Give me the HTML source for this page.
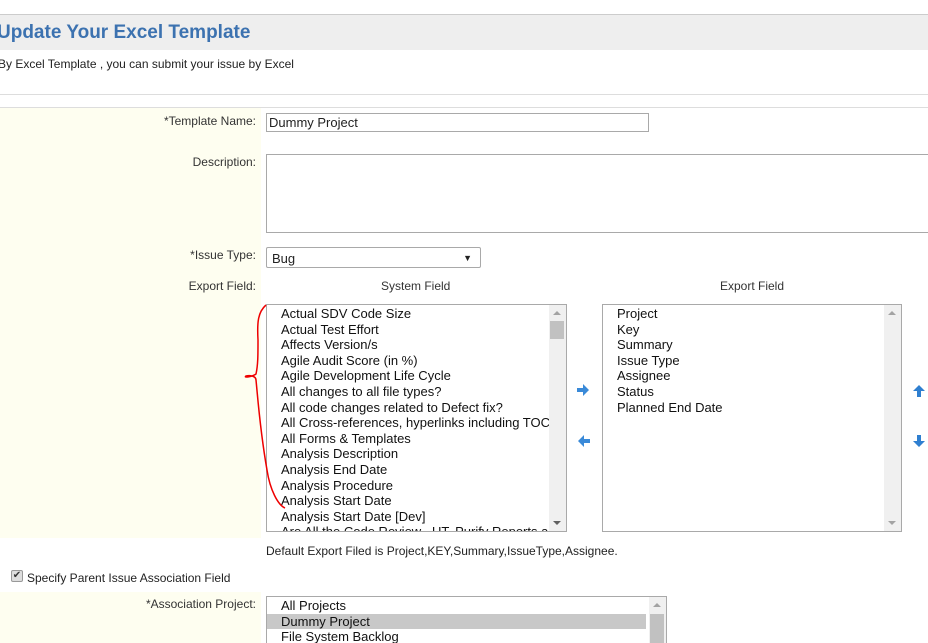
<!DOCTYPE html>
<html><head><style>
*{margin:0;padding:0;box-sizing:border-box}
html,body{width:928px;height:643px;overflow:hidden}
body{background:#fff;font-family:"Liberation Sans",Arial,sans-serif;position:relative;color:#222}
.a{position:absolute}
.lab{position:absolute;right:672px;font-size:12px;color:#333;text-align:right;white-space:nowrap}
.list{position:absolute;border:1px solid #a9a9a9;background:#fff;overflow:hidden;font-size:13px;color:#111}
.it{height:15.6px;line-height:15.6px;padding-left:14px;white-space:nowrap}
.sb{position:absolute;top:0;right:0;width:17px;height:100%;background:#f0f0f0}
.up,.dn{position:absolute;left:4px;width:0;height:0;border-left:4px solid transparent;border-right:4px solid transparent}
.up{top:6px;border-bottom:4px solid #a3a3a3}
.dn{bottom:6px;border-top:4px solid #606060}
</style></head><body>
<div class="a" style="left:0;top:14px;width:928px;height:1px;background:#ccc"></div>
<div class="a" style="left:0;top:15px;width:928px;height:35px;background:#eee"></div>
<div class="a" style="left:-3px;top:22px;font-size:19px;font-weight:bold;color:#3c72b0">Update Your Excel Template</div>
<div class="a" style="left:-2px;top:57px;font-size:12px;color:#222">By Excel Template , you can submit your issue by Excel</div>
<div class="a" style="left:0;top:94px;width:928px;height:1px;background:#ddd"></div>
<div class="a" style="left:0;top:107px;width:928px;height:1px;background:#ddd"></div>
<div class="a" style="left:0;top:108px;width:261px;height:430px;background:#fefef0"></div>
<div class="a" style="left:0;top:592px;width:261px;height:51px;background:#fefef0"></div>

<div class="lab" style="top:114px">*Template Name:</div>
<div class="a" style="left:266px;top:113px;width:383px;height:19px;border:1px solid #a9a9a9;font-size:13px;padding:1px 0 0 2px">Dummy Project</div>
<div class="lab" style="top:155px">Description:</div>
<div class="a" style="left:266px;top:154px;width:670px;height:79px;border:1px solid #a9a9a9"></div>
<div class="lab" style="top:248px">*Issue Type:</div>
<div class="a" style="left:266px;top:247px;width:215px;height:21px;border:1px solid #a9a9a9;border-radius:2px;font-size:13px;padding:3px 0 0 5px">Bug<span style="position:absolute;right:8px;top:5px;font-size:9px">▼</span></div>
<div class="lab" style="top:279px">Export Field:</div>
<div class="a" style="left:381px;top:279px;font-size:12px;color:#333">System Field</div>
<div class="a" style="left:720px;top:279px;font-size:12px;color:#333">Export Field</div>

<div class="list" style="left:266px;top:304px;width:301px;height:228px;padding-top:1px">
<div class="it">Actual SDV Code Size</div><div class="it">Actual Test Effort</div><div class="it">Affects Version/s</div><div class="it">Agile Audit Score (in %)</div><div class="it">Agile Development Life Cycle</div><div class="it">All changes to all file types?</div><div class="it">All code changes related to Defect fix?</div><div class="it">All Cross-references, hyperlinks including TOC</div><div class="it">All Forms &amp; Templates</div><div class="it">Analysis Description</div><div class="it">Analysis End Date</div><div class="it">Analysis Procedure</div><div class="it">Analysis Start Date</div><div class="it">Analysis Start Date [Dev]</div><div class="it">Are All the Code Review , UT, Purify Reports a</div>
<div class="sb"><div class="up"></div><div class="a" style="left:1px;top:16px;width:14px;height:18px;background:#c1c1c1"></div><div class="dn"></div></div>
</div>
<div class="list" style="left:602px;top:304px;width:300px;height:228px;padding-top:1px">
<div class="it">Project</div><div class="it">Key</div><div class="it">Summary</div><div class="it">Issue Type</div><div class="it">Assignee</div><div class="it">Status</div><div class="it">Planned End Date</div>
<div class="sb"><div class="up"></div><div class="dn" style="border-top-color:#a3a3a3"></div></div>
</div>
<svg class="a" style="left:0;top:0" width="928" height="643">
<path d="M577 388h6v-4l6 6-6 6v-4h-6z" fill="#3a8ad8"/>
<path d="M590 439h-6v-4l-6 6 6 6v-4h6z" fill="#3a8ad8"/>
<path d="M917 397v-6h-4l6-6 6 6h-4v6z" fill="#2f7fd0"/>
<path d="M917 435v6h-4l6 6 6-6h-4v-6z" fill="#2f7fd0"/>
<path d="M266 305C258 312 257 322 258 340C258 355 258 365 256 374C252 377 243 378 246 376C250 375 256 376 256 380C258 400 260 430 267 470C270 490 278 505 285 508" fill="none" stroke="#e00" stroke-width="1.5"/>
</svg>
<div class="a" style="left:266px;top:544px;font-size:12px;color:#222">Default Export Filed is Project,KEY,Summary,IssueType,Assignee.</div>
<div class="a" style="left:11px;top:570px;width:12px;height:12px;border:1px solid #999;border-radius:2px;background:#ddd;font-size:10px;line-height:10px;text-align:center;color:#333">✔</div>
<div class="a" style="left:27px;top:571px;font-size:12px;color:#222">Specify Parent Issue Association Field</div>
<div class="lab" style="top:597px">*Association Project:</div>
<div class="list" style="left:266px;top:596px;width:401px;height:60px;padding-top:1px">
<div class="it">All Projects</div><div class="it" style="background:#c8c8c8;margin-right:20px">Dummy Project</div><div class="it">File System Backlog</div>
<div class="sb"><div class="up"></div><div class="a" style="left:1px;top:17px;width:14px;height:30px;background:#c1c1c1"></div></div>
</div>
</body></html>
